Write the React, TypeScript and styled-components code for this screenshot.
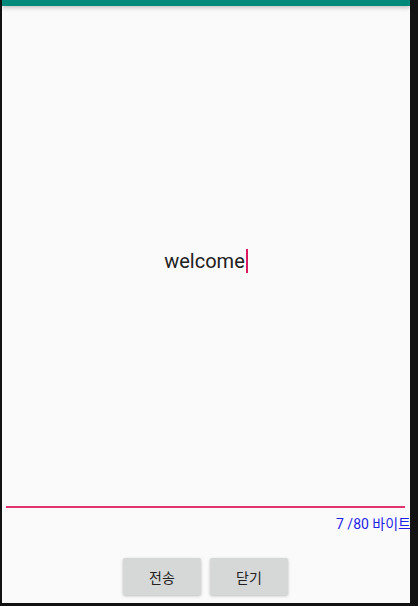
import React from "react";
import styled, { createGlobalStyle } from "styled-components";

const Global = createGlobalStyle`
  html, body { margin: 0; padding: 0; background: #121212; }
  body { font-family: Roboto, "Noto Sans CJK KR", sans-serif; }
`;

const Frame = styled.div`
  width: 418px;
  height: 606px;
  display: flex;
  background: #121212;
  overflow: hidden;
`;

const Screen = styled.div`
  margin-left: 2px;
  width: 408px;
  height: 603px;
  background: #fafafa;
  display: flex;
  flex-direction: column;
`;

const StatusBar = styled.div`
  height: 6px;
  background: #00897b;
  box-shadow: 0 2px 4px rgba(0, 0, 0, 0.22);
  position: relative;
  z-index: 1;
`;

const EditArea = styled.div`
  height: 500px;
  display: flex;
  align-items: center;
  justify-content: center;
  padding-top: 10px;
  box-sizing: border-box;
`;

const EditText = styled.span`
  font-family: Roboto, sans-serif;
  font-size: 20px;
  color: #212121;
  display: flex;
  align-items: center;
`;

const Cursor = styled.span`
  display: inline-block;
  width: 2px;
  height: 24px;
  background: #d81b60;
  margin-left: 1px;
`;

const Underline = styled.div`
  height: 2px;
  margin: 0 5px 0 4px;
  background: #e0336f;
`;

const Counter = styled.div`
  font-family: Roboto, "Noto Sans CJK KR", sans-serif;
  font-size: 14px;
  color: #1e1ee6;
  text-align: right;
  margin-right: -1px;
  margin-top: 7px;
  line-height: 18px;
`;

const ButtonRow = styled.div`
  display: flex;
  justify-content: center;
  gap: 9px;
  margin-top: 25px;
  margin-left: -1px;
`;

const Button = styled.div`
  width: 78px;
  height: 37px;
  background: #d6d7d7;
  border-radius: 2px;
  box-shadow: 0 1px 3px rgba(0, 0, 0, 0.25);
  display: flex;
  align-items: center;
  justify-content: center;
  font-family: Roboto, "Noto Sans CJK KR", sans-serif;
  font-size: 14px;
  color: #222;
`;

export default function App() {
  return (
    <>
      <Global />
      <Frame>
        <Screen>
          <StatusBar />
          <EditArea>
            <EditText>
              welcome
              <Cursor />
            </EditText>
          </EditArea>
          <Underline />
          <Counter>7 /80 바이트</Counter>
          <ButtonRow>
            <Button>전송</Button>
            <Button>닫기</Button>
          </ButtonRow>
        </Screen>
      </Frame>
    </>
  );
}
